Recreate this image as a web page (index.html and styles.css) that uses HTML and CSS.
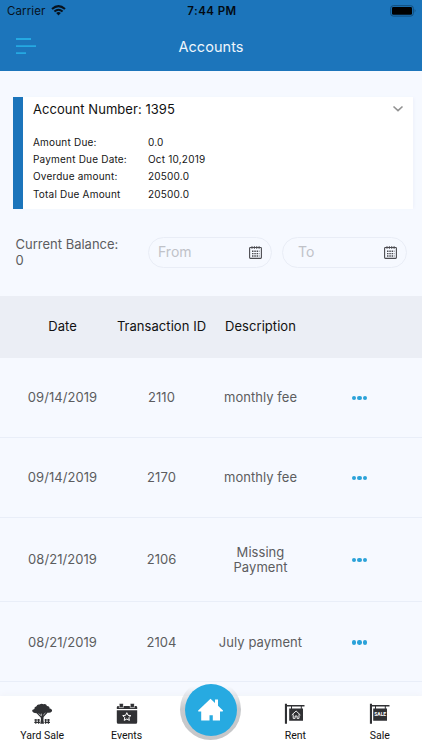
FILE: index.html
```html
<!DOCTYPE html>
<html lang="en">
<head>
<meta charset="utf-8">
<title>Accounts</title>
<link rel="stylesheet" href="styles.css">
</head>
<body>
<div class="screen">
  <header class="header">
    <div class="status">
      <div class="carrier"><span>Carrier</span>
        <svg width="15" height="11" viewBox="0 0 15 11"><path d="M1 4.1Q7.5-1.9 14 4.1M3.4 6.5Q7.5 2.9 11.6 6.5" fill="none" stroke="#07121d" stroke-width="2"/><path d="M5.2 8Q7.5 6.1 9.8 8L7.5 10.4Z" fill="#07121d"/></svg>
      </div>
      <div class="clock">7:44 PM</div>
      <svg class="battery" width="27" height="12" viewBox="0 0 27 12"><rect x=".7" y=".7" width="22.6" height="10.4" rx="2.6" fill="none" stroke="#124c79"/><rect x="2" y="2" width="20" height="7.8" rx="1.3" fill="#000"/><path d="M24.7 4q1.7 1.8 0 3.8z" fill="#124c79"/></svg>
    </div>
    <div class="titlebar">
      <svg class="menu" width="22" height="18" viewBox="0 0 22 18"><path d="M1 2H16M1 9.1H21M1 16.2H11" stroke="#25a9e2" stroke-width="1.8"/></svg>
      <h1 class="title">Accounts</h1>
    </div>
  </header>

  <section class="card">
    <div class="card-head"><span>Account Number: 1395</span>
      <svg width="12" height="8" viewBox="0 0 12 8"><path d="M1.5 1.5 6 5.7 10.5 1.5" fill="none" stroke="#929292" stroke-width="1.6"/></svg>
    </div>
    <dl class="details">
      <dt>Amount Due:</dt><dd>0.0</dd>
      <dt>Payment Due Date:</dt><dd>Oct 10,2019</dd>
      <dt>Overdue amount:</dt><dd>20500.0</dd>
      <dt>Total Due Amount</dt><dd>20500.0</dd>
    </dl>
  </section>

  <section class="filters">
    <div class="balance">Current Balance:<br>0</div>
    <div class="field"><span>From</span>
      <svg width="13" height="13" viewBox="0 0 13 13"><rect x=".6" y="1.5" width="11.8" height="10.9" rx=".8" fill="none" stroke="#4b4b50" stroke-width="1.1"/><path d="M3 .2V2.7M5.4 .2V2.7M7.7 .2V2.7M10.1 .2V2.7" stroke="#4b4b50" stroke-width="1.1"/><path d="M3 5.2H10.4M3 7.6H10.4M3 10H10.4" stroke="#4b4b50" stroke-width="1.4" stroke-dasharray="1.5 .8"/></svg>
    </div>
    <div class="field field-to"><span>To</span>
      <svg width="13" height="13" viewBox="0 0 13 13"><rect x=".6" y="1.5" width="11.8" height="10.9" rx=".8" fill="none" stroke="#4b4b50" stroke-width="1.1"/><path d="M3 .2V2.7M5.4 .2V2.7M7.7 .2V2.7M10.1 .2V2.7" stroke="#4b4b50" stroke-width="1.1"/><path d="M3 5.2H10.4M3 7.6H10.4M3 10H10.4" stroke="#4b4b50" stroke-width="1.4" stroke-dasharray="1.5 .8"/></svg>
    </div>
  </section>

  <section class="table">
    <div class="row row-head"><div>Date</div><div class="wide">Transaction ID</div><div>Description</div><div></div></div>
    <div class="row"><div>09/14/2019</div><div>2110</div><div>monthly fee</div><div class="more"><i></i><i></i><i></i></div></div>
    <div class="row"><div>09/14/2019</div><div>2170</div><div>monthly fee</div><div class="more"><i></i><i></i><i></i></div></div>
    <div class="row row-tall"><div>08/21/2019</div><div>2106</div><div>Missing<br>Payment</div><div class="more"><i></i><i></i><i></i></div></div>
    <div class="row"><div>08/21/2019</div><div>2104</div><div>July payment</div><div class="more"><i></i><i></i><i></i></div></div>
  </section>

  <nav class="tabs">
    <div class="tab">
      <svg width="22" height="22" viewBox="0 0 22 22" fill="#303134"><path d="M1 8Q1.2 6.3 3.4 6Q3 4 5.5 3.3Q6 1 8.5 1.5Q10.5 0 12.5 1.2Q15.3.6 16 3Q18.8 3.3 18.5 5.5Q21.5 6 21 8.2Q19.2 10.3 16.8 9.6L12.6 14Q12 17 13 20.7H9.2Q10.3 17 9.9 14.7L5.6 10.2Q2.4 10.3 1 8Z"/><path d="M7.6 10.6 10.4 12.8V10.6M12.3 12 14.4 10" stroke="#fff" stroke-width=".6" fill="none"/><path d="M3.3 17H9M3.3 19.3H9M13.5 17H19M13.5 19.3H19M4.8 16V20.8M7.6 16V20.8M14.6 16V20.8M17.4 16V20.8" stroke="#303134" stroke-width="1.2"/></svg>
      <span>Yard Sale</span>
    </div>
    <div class="tab">
      <svg width="22" height="22" viewBox="0 0 22 22" fill="#303134"><path d="M.8 7.2H21.2V19.3Q21.2 20.8 19.7 20.8H2.3Q.8 20.8.8 19.3ZM.8 6.1V4.3Q.8 3 2.3 3H3.4V.8H7.2V3H14.4V.8H18.2V3H19.7Q21.2 3 21.2 4.3V6.1Z"/><path d="M3.2 1.5V4.6H7.4V1.5M14.2 1.5V4.6H18.4V1.5" fill="none" stroke="#fff" stroke-width=".6"/><path d="M10.8 9.7 12 12.3 14.9 12.6 12.8 14.6 13.4 17.4 10.8 16 8.2 17.4 8.8 14.6 6.7 12.6 9.6 12.3Z" fill="none" stroke="#fff"/></svg>
      <span>Events</span>
    </div>
    <div class="tab home">
      <div class="ring"><div class="disc">
        <svg width="27" height="23" viewBox="0 0 27 23"><path d="M13.5.8 18 5V1.4H21V7.8L26 12.6Q26.5 13.5 25 13.5H23V22.4H15.8V17.3H12.5V22.4H4.2V13.5H1.8Q.6 13.4 1.2 12.6Z" fill="#fff"/></svg>
      </div></div>
    </div>
    <div class="tab">
      <svg width="22" height="22" viewBox="0 0 22 22"><path d="M.9 .7H3V20.7H.9ZM3 2H20.5V3.4H3ZM5.2 5.5H19V17.8H5.2Z" fill="#303134"/><path d="M7.5 3V6M17.3 3V6" stroke="#303134"/><path d="M7.8 12 12.1 8 16.4 12M9.2 11.3V15.4H11.1V13H13.1V15.4H15V11.3" fill="none" stroke="#fff" stroke-width=".9"/></svg>
      <span>Rent</span>
    </div>
    <div class="tab">
      <svg width="22" height="22" viewBox="0 0 22 22"><path d="M.9 .7H3V20.7H.9ZM3 2H20.5V3.4H3ZM4.2 5.5H18V17.8H4.2Z" fill="#303134"/><path d="M6.5 3V6M16.3 3V6" stroke="#303134"/><text class="sign" x="11.2" y="13.2" text-anchor="middle" textLength="11.8">SALE</text></svg>
      <span>Sale</span>
    </div>
  </nav>
</div>
</body>
</html>
```
FILE: styles.css
```css
* { box-sizing: border-box; }
body { margin: 0; font-family: Inter, sans-serif; background: #f6f9ff; }
svg { display: block; flex: none; }
.screen { width: 422px; height: 750px; display: flex; flex-direction: column; overflow: hidden; background: #f6f9ff; }
.header { height: 71px; flex: none; background: #1c75bb; }
.status { height: 22px; display: grid; grid-template-columns: 1fr 60px 1fr; align-items: center; padding: 0 5px 0 7px; color: #07121d; font-size: 11.5px; }
.carrier { display: flex; align-items: center; gap: 6px; letter-spacing: .1px; }
.carrier svg { margin-top: -1px; }
.clock { font-size: 11.5px; font-weight: 600; white-space: nowrap; text-align: center; letter-spacing: .45px; color: #020a12; }
.battery { justify-self: end; margin-top: -1px; }
.titlebar { height: 48px; display: grid; grid-template-columns: 50px 1fr 50px; align-items: center; }
.menu { margin-left: 14.5px; }
.title { margin: 0; font-size: 14.5px; font-weight: 400; color: #eef6fc; text-align: center; letter-spacing: .05px; }
.card { height: 112px; flex: none; margin: 26px 9px 0 12.5px; border-left: 10.5px solid #1c75bb; background: #fff; padding: 0 9px 0 10.5px; box-shadow: 2px 0 3px -1px #edf0fa; }
.card-head { height: 24px; display: flex; align-items: center; justify-content: space-between; font-size: 13px; color: #111; letter-spacing: .05px; }
.details { margin: 12px 0 0; display: grid; grid-template-columns: 115px 1fr; grid-auto-rows: 17.3px; align-items: center; font-size: 10px; color: #151515; letter-spacing: .2px; }
.details dd { margin: 0; }
.filters { height: 86.5px; flex: none; display: flex; align-items: center; padding-left: 15.5px; }
.balance { width: 132.5px; font-size: 13px; line-height: 15.5px; color: #5c5d60; padding-top: 1px; }
.field { width: 124px; height: 31px; border: 1px solid #e9edf6; border-radius: 16px; display: flex; align-items: center; justify-content: space-between; padding: 0 9px; font-size: 14px; color: #c0c2c8; }
.field span { margin-top: -1px; }
.field-to { width: 125px; margin-left: 10px; padding-left: 15px; }
.row { height: 80.3px; display: grid; grid-template-columns: repeat(4, 99px); padding: 1.5px 0 0 13px; align-items: center; text-align: center; font-size: 13px; line-height: 15.7px; color: #5c5d60; border-bottom: 1px solid #e9eef8; letter-spacing: .05px; }
.row-head { height: 62px; background: #ebeef5; color: #111; border-bottom-color: #ebeef5; }
.wide { white-space: nowrap; }
.row-tall { height: 84px; }
.more { display: flex; justify-content: center; gap: 1.5px; }
.more i { width: 4.3px; height: 4.3px; border-radius: 50%; background: #2ba2d9; }
.table { height: 400.5px; flex: none; overflow: hidden; }
.tabs { height: 54px; flex: none; display: grid; grid-template-columns: repeat(5, 1fr); background: #fff; box-shadow: 0 -2px 5px #f2f4fa; position: relative; }
.tab { display: flex; flex-direction: column; align-items: center; padding-top: 7px; font-family: Roboto, sans-serif; font-size: 10.5px; line-height: 14px; color: #111; }
.tab span { margin-top: 4px; }
.home { padding: 0; }
.ring { width: 61px; height: 61px; flex: none; margin-top: -17px; border-radius: 50%; display: flex; align-items: center; justify-content: center; background: linear-gradient(#c8cacd00 12%, #c8cacd 48%, #c5c6c8); }
.disc { width: 52px; height: 52px; border-radius: 50%; background: #27aae1; display: flex; align-items: center; justify-content: center; }
.sign { font-family: Roboto, sans-serif; font-size: 5px; font-weight: 700; fill: #fff; }
```
